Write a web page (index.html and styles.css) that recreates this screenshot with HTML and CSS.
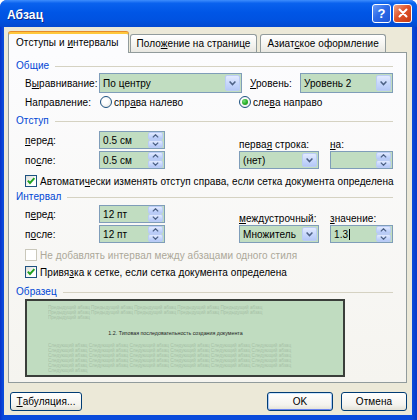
FILE: index.html
```html
<!DOCTYPE html>
<html lang="ru">
<head>
<meta charset="utf-8">
<title>Абзац</title>
<link rel="stylesheet" href="styles.css">
</head>
<body>
<div class="window">
  <div class="titlebar">
    <span class="title">Абзац</span>
    <span class="tb-btns">
      <span class="tb-btn help">?</span>
      <span class="tb-btn close"><svg width="10" height="10" viewBox="0 0 10 10"><path d="M1.5 1.5 L8.5 8.5 M8.5 1.5 L1.5 8.5" stroke="#fff" stroke-width="2" stroke-linecap="round"/></svg></span>
    </span>
  </div>
  <div class="client">
    <div class="tabs">
      <div class="tab active">Отступы и <u>и</u>нтервалы</div>
      <div class="tab t2">Поло<u>ж</u>ение на странице</div>
      <div class="tab">Азиат<u>с</u>кое оформление</div>
    </div>
    <div class="panel">
      <div class="group-h"><span>Общие</span></div>
      <div class="row r-combo">
        <span class="lbl">В<u>ы</u>равнивание:</span>
        <div class="combo c-align"><span class="val">По центру</span><span class="dd"><svg width="7" height="5" viewBox="0 0 7 5"><path d="M0.6 0.6 L3.5 3.6 L6.4 0.6" stroke="#4D6185" stroke-width="1.5" fill="none"/></svg></span></div>
        <span class="lbl-lvl"><u>У</u>ровень:</span>
        <div class="combo c-level"><span class="val">Уровень 2</span><span class="dd"><svg width="7" height="5" viewBox="0 0 7 5"><path d="M0.6 0.6 L3.5 3.6 L6.4 0.6" stroke="#4D6185" stroke-width="1.5" fill="none"/></svg></span></div>
      </div>
      <div class="row r-radio">
        <span class="lbl">Направление:</span>
        <span class="radio-item first"><span class="radio"></span>спр<u>а</u>ва налево</span>
        <span class="radio-item"><span class="radio on"></span>сле<u>в</u>а направо</span>
      </div>

      <div class="group-h g-gap"><span>Отступ</span></div>
      <div class="fgrid">
        <span class="lbl"><u>п</u>еред:</span>
        <div class="spin"><span class="val">0.5 см</span><span class="sb"><span class="sbu"><svg width="7" height="4" viewBox="0 0 7 4"><path d="M0.8 3.4 L3.5 0.8 L6.2 3.4" stroke="#4D6185" stroke-width="1.3" fill="none"/></svg></span><span class="sbd"><svg width="7" height="4" viewBox="0 0 7 4"><path d="M0.8 0.6 L3.5 3.2 L6.2 0.6" stroke="#4D6185" stroke-width="1.3" fill="none"/></svg></span></span></div>
        <span></span>
        <span class="rlbl">перва<u>я</u> строка:</span>
        <span></span>
        <span class="rlbl"><u>н</u>а:</span>

        <span class="lbl">по<u>с</u>ле:</span>
        <div class="spin"><span class="val">0.5 см</span><span class="sb"><span class="sbu"><svg width="7" height="4" viewBox="0 0 7 4"><path d="M0.8 3.4 L3.5 0.8 L6.2 3.4" stroke="#4D6185" stroke-width="1.3" fill="none"/></svg></span><span class="sbd"><svg width="7" height="4" viewBox="0 0 7 4"><path d="M0.8 0.6 L3.5 3.2 L6.2 0.6" stroke="#4D6185" stroke-width="1.3" fill="none"/></svg></span></span></div>
        <span></span>
        <div class="combo"><span class="val">(нет)</span><span class="dd"><svg width="7" height="5" viewBox="0 0 7 5"><path d="M0.6 0.6 L3.5 3.6 L6.4 0.6" stroke="#4D6185" stroke-width="1.5" fill="none"/></svg></span></div>
        <span></span>
        <div class="spin"><span class="val"></span><span class="sb"><span class="sbu"><svg width="7" height="4" viewBox="0 0 7 4"><path d="M0.8 3.4 L3.5 0.8 L6.2 3.4" stroke="#4D6185" stroke-width="1.3" fill="none"/></svg></span><span class="sbd"><svg width="7" height="4" viewBox="0 0 7 4"><path d="M0.8 0.6 L3.5 3.2 L6.2 0.6" stroke="#4D6185" stroke-width="1.3" fill="none"/></svg></span></span></div>
      </div>
      <div class="row r-check c1">
        <span class="check"><svg width="10" height="10" viewBox="0 0 10 10"><path d="M1.8 4.6 L4 7 L8.4 2.2" stroke="#21A121" stroke-width="1.9" fill="none"/></svg></span>
        <span>Автомати<u>ч</u>ески изменять отступ справа, если сетка документа определена</span>
      </div>

      <div class="group-h g-gap2"><span>Интервал</span></div>
      <div class="fgrid g2">
        <span class="lbl">п<u>е</u>ред:</span>
        <div class="spin"><span class="val">12 пт</span><span class="sb"><span class="sbu"><svg width="7" height="4" viewBox="0 0 7 4"><path d="M0.8 3.4 L3.5 0.8 L6.2 3.4" stroke="#4D6185" stroke-width="1.3" fill="none"/></svg></span><span class="sbd"><svg width="7" height="4" viewBox="0 0 7 4"><path d="M0.8 0.6 L3.5 3.2 L6.2 0.6" stroke="#4D6185" stroke-width="1.3" fill="none"/></svg></span></span></div>
        <span></span>
        <span class="rlbl"><u>м</u>еждустрочный:</span>
        <span></span>
        <span class="rlbl"><u>з</u>начение:</span>

        <span class="lbl">п<u>о</u>сле:</span>
        <div class="spin"><span class="val">12 пт</span><span class="sb"><span class="sbu"><svg width="7" height="4" viewBox="0 0 7 4"><path d="M0.8 3.4 L3.5 0.8 L6.2 3.4" stroke="#4D6185" stroke-width="1.3" fill="none"/></svg></span><span class="sbd"><svg width="7" height="4" viewBox="0 0 7 4"><path d="M0.8 0.6 L3.5 3.2 L6.2 0.6" stroke="#4D6185" stroke-width="1.3" fill="none"/></svg></span></span></div>
        <span></span>
        <div class="combo"><span class="val">Множитель</span><span class="dd"><svg width="7" height="5" viewBox="0 0 7 5"><path d="M0.6 0.6 L3.5 3.6 L6.4 0.6" stroke="#4D6185" stroke-width="1.5" fill="none"/></svg></span></div>
        <span></span>
        <div class="spin"><span class="val">1.3<span class="caret"></span></span><span class="sb"><span class="sbu"><svg width="7" height="4" viewBox="0 0 7 4"><path d="M0.8 3.4 L3.5 0.8 L6.2 3.4" stroke="#4D6185" stroke-width="1.3" fill="none"/></svg></span><span class="sbd"><svg width="7" height="4" viewBox="0 0 7 4"><path d="M0.8 0.6 L3.5 3.2 L6.2 0.6" stroke="#4D6185" stroke-width="1.3" fill="none"/></svg></span></span></div>
      </div>
      <div class="row r-check c2 disabled">
        <span class="check"></span>
        <span>Не добавлять интервал между абзацами одного стиля</span>
      </div>
      <div class="row r-check c3">
        <span class="check"><svg width="10" height="10" viewBox="0 0 10 10"><path d="M1.8 4.6 L4 7 L8.4 2.2" stroke="#21A121" stroke-width="1.9" fill="none"/></svg></span>
        <span>Привя<u>з</u>ка к сетке, если сетка документа определена</span>
      </div>

      <div class="group-h g-gap3"><span>Образец</span></div>
      <div class="preview">
        <div class="pv-prev">Предыдущий абзац Предыдущий абзац Предыдущий абзац Предыдущий абзац Предыдущий абзац Предыдущий абзац Предыдущий абзац Предыдущий абзац Предыдущий абзац Предыдущий абзац Предыдущий абзац</div>
        <div class="pv-cur">1.2. Типовая последовательность создания документа</div>
        <div class="pv-next">Следующий абзац Следующий абзац Следующий абзац Следующий абзац Следующий абзац Следующий абзац Следующий абзац Следующий абзац Следующий абзац Следующий абзац Следующий абзац Следующий абзац Следующий абзац Следующий абзац Следующий абзац Следующий абзац Следующий абзац Следующий абзац Следующий абзац Следующий абзац Следующий абзац Следующий абзац Следующий абзац Следующий абзац Следующий абзац Следующий абзац Следующий абзац Следующий абзац Следующий абзац Следующий абзац Следующий абзац</div>
      </div>
    </div>
    <div class="buttons">
      <span class="btn b-tab"><u>Т</u>абуляция...</span>
      <span class="spacer"></span>
      <span class="btn b-ok">OK</span>
      <span class="btn b-cancel">Отмена</span>
    </div>
  </div>
</div>
</body>
</html>
```

FILE: styles.css
```css
* { box-sizing: border-box; }
html, body { margin: 0; padding: 0; }
body {
  width: 417px;
  height: 420px;
  overflow: hidden;
  background: #fff;
  font-family: "Liberation Sans", Arial, sans-serif;
  font-size: 10px;
  letter-spacing: 0.07px;
  color: #000;
}
u { text-decoration: underline; text-underline-offset: 1px; }

.window {
  width: 417px;
  height: 420px;
  display: flex;
  flex-direction: column;
  background: linear-gradient(to right, #0832C9 0px, #0A4BDB 3px, #0A4BDB 412px, #0838C8 417px);
  border-radius: 7px 7px 0 0;
  overflow: hidden;
}

.titlebar {
  height: 27px;
  flex: none;
  display: flex;
  align-items: center;
  padding: 0 5px 0 7px;
  background: linear-gradient(to bottom, #3E8DFD 0%, #0A62EE 12%, #0056E6 45%, #0052E0 75%, #0349D0 100%);
}
.title {
  color: #fff;
  font-weight: bold;
  font-size: 12px;
  letter-spacing: 0.1px;
  text-shadow: 1px 1px 0 #0A2A8E;
  margin-top: 2px;
}
.tb-btns { margin-left: auto; display: flex; gap: 2px; margin-top: -1px; }
.tb-btn {
  width: 19px;
  height: 19px;
  border: 1px solid #fff;
  border-radius: 3px;
  display: flex;
  align-items: center;
  justify-content: center;
  color: #fff;
  font-weight: bold;
  font-size: 13px;
}
.help { background: linear-gradient(135deg, #6A9CF7 0%, #2E6BE8 45%, #1F55D6 100%); }
.close { background: linear-gradient(135deg, #EFA58A 0%, #E0542B 45%, #C53A14 100%); }

.client {
  flex: 1;
  margin: 0 5px 5px 4px;
  background: #ECE9D8;
  display: flex;
  flex-direction: column;
  padding: 5px 5px 0 4px;
}

.tabs {
  display: flex;
  align-items: flex-end;
  height: 21px;
  margin-bottom: -1px;
  position: relative;
  z-index: 1;
}
.tab {
  height: 18px;
  margin-bottom: 1px;
  padding: 3px 6px 0 6px;
  border: 1px solid #919B9C;
  border-bottom: none;
  border-radius: 3px 3px 0 0;
  background: linear-gradient(to bottom, #FFFFFF, #F3F3EF 60%, #E8E7E1);
  white-space: nowrap;
  margin-right: 1px;
}
.tab.t2 { margin-right: 3px; }
.tab.active {
  height: 21px;
  margin-bottom: 0;
  padding: 3px 9px 0 7px;
  border-top: 2px solid #FFC83C;
  box-shadow: 0 -1px 0 #E68B2C;
  background: #FCFCFE;
}

.panel {
  height: 331px;
  width: 399px;
  flex: none;
  border: 1px solid #919B9C;
  background: linear-gradient(to bottom, #FCFCFE, #F5F4EF);
  padding: 0 13px 0 7px;
}

.group-h {
  display: flex;
  align-items: center;
  height: 13px;
  margin-top: 6px;
  color: #0046D5;
}
.group-h::after {
  content: "";
  flex: 1;
  border-top: 1px solid #D5D2C2;
  margin: 1px 0 0 6px;
}
.g-gap { margin-top: 4px; }
.g-gap2 { margin-top: 2px; }
.g-gap3 { margin-top: 6px; }

.row { display: flex; align-items: center; padding-left: 9px; }
.lbl { width: 74px; flex: none; white-space: nowrap; }
.r-combo { height: 20px; margin-top: 1px; }
.r-radio { height: 16px; margin-top: 1px; }

.combo {
  height: 20px;
  border: 1px solid #7F9DB9;
  background: #C1DDC1;
  display: flex;
  align-items: center;
  padding-left: 3px;
  white-space: nowrap;
}
.c-align { width: 143px; flex: none; }
.c-level { flex: 1; }
.lbl-lvl { width: 50px; flex: none; margin-left: 8px; }
.combo .val { flex: 1; }
.dd {
  width: 15px;
  height: 16px;
  margin-right: 1px;
  flex: none;
  border: 1px solid #BACCF5;
  border-radius: 2px;
  background: linear-gradient(to bottom, #E2EAFE, #C4D5FB 60%, #B5C8F6);
  display: flex;
  align-items: center;
  justify-content: center;
}

.radio-item { display: flex; align-items: center; white-space: nowrap; }
.radio-item.first { width: 140px; flex: none; padding-left: 1px; }
.radio {
  width: 12px;
  height: 12px;
  border: 1px solid #1C5180;
  border-radius: 50%;
  background: radial-gradient(circle at 40% 40%, #FFFFFF 30%, #E2E2DD 100%);
  margin-right: 2px;
  display: flex;
  align-items: center;
  justify-content: center;
}
.radio.on::after {
  content: "";
  width: 6px;
  height: 6px;
  border-radius: 50%;
  background: radial-gradient(circle at 35% 35%, #7BE07B 0%, #2BB12B 50%, #178E17 100%);
}

.fgrid {
  display: grid;
  grid-template-columns: 74px 66px 74px 80px 11px 1fr;
  grid-template-rows: 18px 18px;
  row-gap: 2px;
  align-items: center;
  margin-top: 4px;
  padding-left: 9px;
}
.fgrid.g2 { margin-top: 2px; }
.fgrid .combo { height: 18px; }
.fgrid .combo .dd { height: 14px; }
.rlbl { align-self: end; white-space: nowrap; line-height: 12px; margin-bottom: -2px; }

.spin {
  height: 18px;
  border: 1px solid #7F9DB9;
  background: #C1DDC1;
  display: flex;
  align-items: center;
  padding-left: 3px;
}
.spin .val { flex: 1; white-space: nowrap; display: flex; align-items: center; }
.caret { display: inline-block; width: 1px; height: 11px; background: #000; margin-left: 1px; }
.sb {
  width: 15px;
  height: 16px;
  margin-right: 1px;
  flex: none;
  display: flex;
  flex-direction: column;
}
.sbu, .sbd {
  flex: 1;
  border: 1px solid #BACCF5;
  border-radius: 2px;
  background: linear-gradient(to bottom, #E2EAFE, #C4D5FB 60%, #B5C8F6);
  display: flex;
  align-items: center;
  justify-content: center;
}

.r-check { height: 14px; white-space: nowrap; padding-left: 9px; }
.c1 { margin-top: 5px; }
.c2 { margin-top: 5px; }
.c3 { margin-top: 3px; }
.check {
  width: 12px;
  height: 12px;
  flex: none;
  border: 1px solid #1C5180;
  background: linear-gradient(135deg, #DCDCD7, #FFFFFF 70%);
  margin-right: 3px;
  display: flex;
  align-items: center;
  justify-content: center;
}
.disabled { color: #ACA899; }
.disabled .check { border-color: #CAC8BB; background: #fff; }

.preview {
  margin: 1px 0 0 9px;
  width: 320px;
  height: 78px;
  border: 2px solid #3A3E3A;
  background: #C0DCC0;
  padding: 4px 40px 0 21px;
  overflow: hidden;
  font-size: 4.6px;
  line-height: 5px;
  letter-spacing: 0;
}
.pv-prev { color: #A6C0A6; height: 15px; overflow: hidden; padding-right: 16px; }
.pv-cur {
  color: #1E1E1E;
  text-align: center;
  font-size: 5.3px;
  line-height: 6px;
  margin: 10px 0 0 0;
  white-space: nowrap;
}
.pv-next { color: #A6C0A6; margin-top: 7px; height: 35px; overflow: hidden; }

.buttons {
  display: flex;
  margin-top: 9px;
  padding-left: 2px;
}
.spacer { flex: 1; }
.btn {
  height: 19px;
  border: 1px solid #003C74;
  border-radius: 3px;
  background: linear-gradient(to bottom, #FFFFFF, #F4F3EE 70%, #E3E1D6);
  display: flex;
  align-items: center;
  justify-content: center;
  white-space: nowrap;
}
.b-tab { width: 72px; }
.b-ok {
  width: 66px;
  box-shadow: inset 0 1px 0 #CEE7FF, inset 1px 0 0 #A8C9F6, inset -1px 0 0 #A8C9F6, inset 0 -1px 0 #6982EE;
}
.b-cancel { width: 66px; margin-left: 8px; }
```
